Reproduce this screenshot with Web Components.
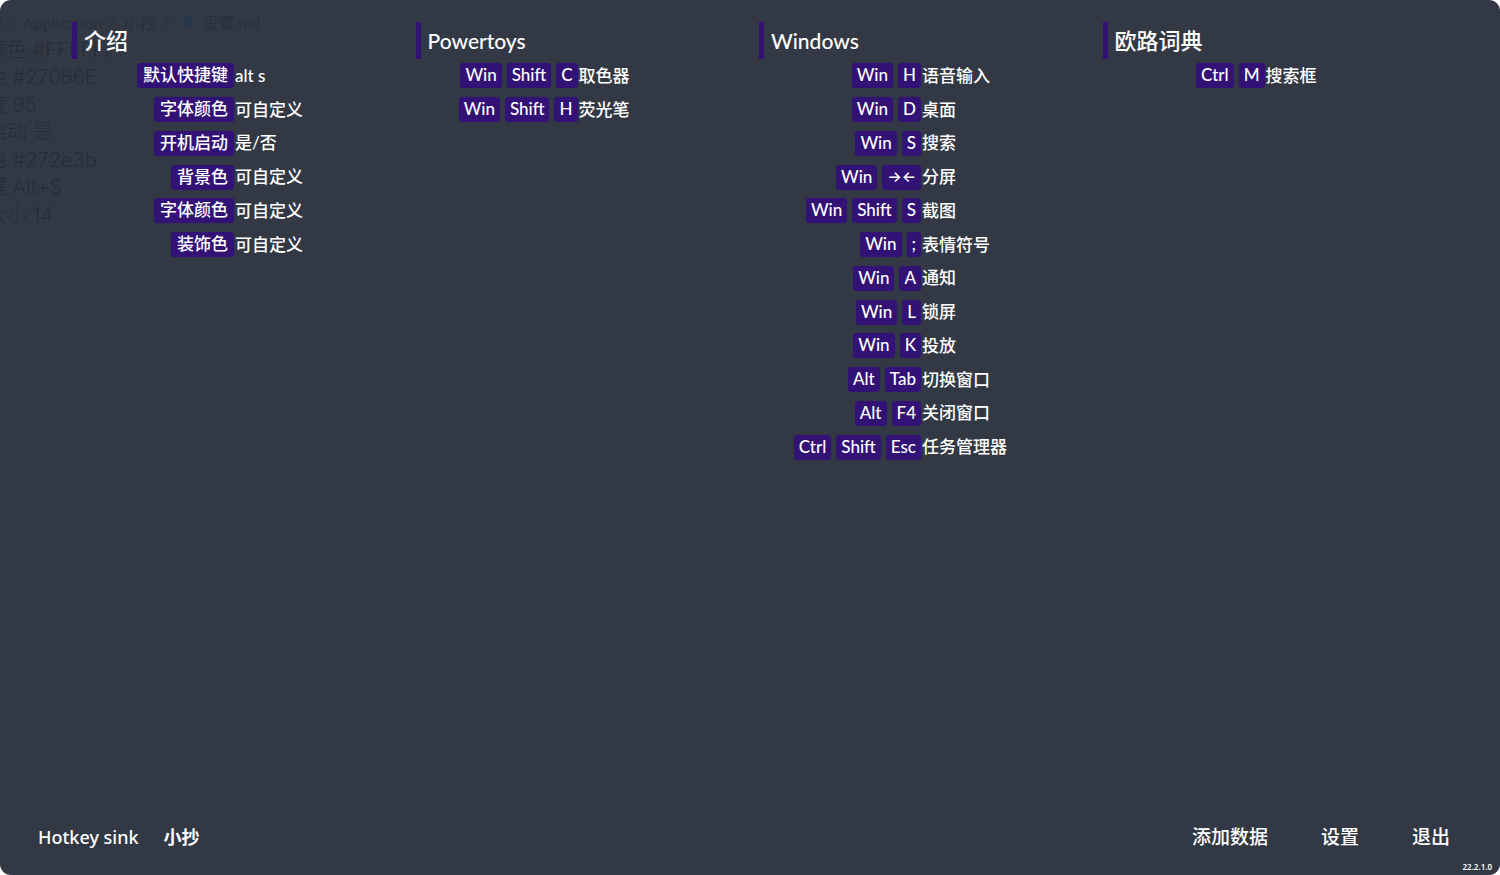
<!DOCTYPE html>
<html lang="zh-CN">
<head>
<meta charset="utf-8">
<title>Hotkey sink 小抄</title>
<style>
  html, body { margin: 0; background: #fff; }
</style>
</head>
<body>
<hotkey-app></hotkey-app>

<script>
const define = (name, html, extra) => {
  const template = document.createElement('template');
  template.innerHTML = html;
  customElements.define(name, class extends HTMLElement {
    constructor() {
      super();
      this.attachShadow({ mode: 'open' }).append(template.content.cloneNode(true));
    }
    connectedCallback() { if (extra) extra(this); }
  });
};

/* One key cap */
define('key-cap', `
  <style>
    :host { display: block; }
    kbd {
      display: block; box-sizing: border-box; height: 25px; padding: 0 5px;
      border-radius: 4px; background: var(--accent);
      box-shadow: 0 0 1px var(--accent);
      font: inherit; font-weight: 500; line-height: 24px; white-space: nowrap;
    }
    :host([han]) kbd { padding: 0 6px; }
    :host([arrows]) kbd { font-family: Inter, sans-serif; font-size: 15px; }
  </style>
  <kbd><slot></slot></kbd>`);

/* One shortcut: its keys on the left, its meaning on the right */
define('hotkey-row', `
  <style>
    :host { display: grid; grid-template-columns: 162px 1fr; gap: 1px; align-items: center; }
    .keys { display: flex; justify-content: flex-end; gap: 5px; }
    .text { font-weight: 500; line-height: 24px; white-space: nowrap; }
  </style>
  <div class="keys"></div>
  <div class="text"><slot></slot></div>`, row => {
    const box = row.shadowRoot.querySelector('.keys');
    box.replaceChildren(...row.getAttribute('keys').split(' ').map(key => {
      const cap = document.createElement('key-cap');
      cap.textContent = key;
      if (/[\u4e00-\u9fff]/.test(key)) cap.setAttribute('han', '');
      if (/[→←]/.test(key)) cap.setAttribute('arrows', '');
      return cap;
    }));
  });

/* A titled group of shortcuts */
define('hotkey-group', `
  <style>
    :host { display: block; }
    h2 {
      margin: 0; padding-left: 7px; border-left: 5px solid var(--accent);
      font-size: 22px; font-weight: 500; line-height: 37px;
    }
    :host([latin]) h2 { font-size: 21px; }
    .rows { display: grid; grid-template-rows: repeat(12, 1fr); height: 405px; }
  </style>
  <section>
    <h2></h2>
    <div class="rows"><slot></slot></div>
  </section>`, group => {
    group.shadowRoot.querySelector('h2').textContent = group.getAttribute('heading');
  });

/* The document that shows faintly through the window */
define('page-behind', `
  <style>
    :host {
      display: block; position: absolute; inset: 0 auto auto 0; color: #262d36;
      font-weight: 400; white-space: nowrap; pointer-events: none;
    }
    .path { display: flex; align-items: center; gap: 7px; height: 24px; margin: 10px 0 3px -2px; font-size: 16px; color: #293039; }
    .chevron { width: 7px; height: 10px; fill: none; stroke: currentColor; }
    .mark { width: 12px; height: 14px; margin: 0 2px 0 5px; fill: #25364b; }
    p { margin: 0 0 0 -13px; font: 300 20px/27px Inter, "Noto Sans CJK SC", sans-serif; }
    .lines { display: grid; height: 192px; grid-template-rows: repeat(7, 1fr); }
  </style>
  <div class="path">
    <span>l</span>
    <svg class="chevron" viewBox="0 0 7 10"><path d="M1 1l5 4-5 4"/></svg>
    <span>Application</span>
    <svg class="chevron" viewBox="0 0 7 10"><path d="M1 1l5 4-5 4"/></svg>
    <span>小抄</span>
    <svg class="chevron" viewBox="0 0 7 10"><path d="M1 1l5 4-5 4"/></svg>
    <svg class="mark" viewBox="0 0 12 14"><path d="M2 1l2 1 1-1h3l1 1 1-1v6l2 1-5 5H6L1 9V7l1-1z"/></svg>
    <span>设置.md</span>
  </div>
  <div class="lines">
    <p>颜色 #FFFFFF</p>
    <p>色 #27066E</p>
    <p>度 95</p>
    <p>启动 是</p>
    <p>色 #272e3b</p>
    <p>键 Alt+S</p>
    <p>大小 14</p>
  </div>`);

define('app-footer', `
  <style>
    :host { display: block; }
    .bar { display: flex; align-items: center; padding: 0 50px 0 38px; height: 28px; }
    .name { display: flex; gap: 25px; margin: 0; font: 500 18px/30px "Noto Sans", "Noto Sans CJK SC", sans-serif; }
    .name span + span { font-weight: 700; }
    nav { display: flex; gap: 53px; margin-left: auto; }
    button {
      border: 0; padding: 0; background: none; color: inherit; cursor: pointer;
      font: inherit; font-size: 19px; font-weight: 500; line-height: 26px;
    }
    small {
      display: block; padding: 10px 8px 2px; text-align: right;
      font: 600 8px/12px "Noto Sans", sans-serif;
    }
  </style>
  <footer>
    <div class="bar">
      <h1 class="name"><span>Hotkey sink</span><span>小抄</span></h1>
      <nav>
        <button type="button">添加数据</button>
        <button type="button">设置</button>
        <button type="button">退出</button>
      </nav>
    </div>
    <small>22.2.1.0</small>
  </footer>`);

define('hotkey-app', `
  <style>
    :host {
      --accent: #321275;
      display: flex; flex-direction: column; position: relative; overflow: hidden;
      box-sizing: border-box; min-height: 100vh; border-radius: 11px;
      background: #333944; color: #fff;
      font: 17px Lato, "Noto Sans CJK SC", sans-serif;
    }
    main {
      flex: 1; position: relative; display: grid; align-items: start;
      grid-template-columns: repeat(4, 1fr); padding: 22px 54px 0 72px;
    }
  </style>
  <page-behind aria-hidden="true"></page-behind>
  <main>
    <hotkey-group heading="介绍">
      <hotkey-row keys="默认快捷键">alt s</hotkey-row>
      <hotkey-row keys="字体颜色">可自定义</hotkey-row>
      <hotkey-row keys="开机启动">是/否</hotkey-row>
      <hotkey-row keys="背景色">可自定义</hotkey-row>
      <hotkey-row keys="字体颜色">可自定义</hotkey-row>
      <hotkey-row keys="装饰色">可自定义</hotkey-row>
    </hotkey-group>
    <hotkey-group heading="Powertoys" latin>
      <hotkey-row keys="Win Shift C">取色器</hotkey-row>
      <hotkey-row keys="Win Shift H">荧光笔</hotkey-row>
    </hotkey-group>
    <hotkey-group heading="Windows" latin>
      <hotkey-row keys="Win H">语音输入</hotkey-row>
      <hotkey-row keys="Win D">桌面</hotkey-row>
      <hotkey-row keys="Win S">搜索</hotkey-row>
      <hotkey-row keys="Win →←">分屏</hotkey-row>
      <hotkey-row keys="Win Shift S">截图</hotkey-row>
      <hotkey-row keys="Win ;">表情符号</hotkey-row>
      <hotkey-row keys="Win A">通知</hotkey-row>
      <hotkey-row keys="Win L">锁屏</hotkey-row>
      <hotkey-row keys="Win K">投放</hotkey-row>
      <hotkey-row keys="Alt Tab">切换窗口</hotkey-row>
      <hotkey-row keys="Alt F4">关闭窗口</hotkey-row>
      <hotkey-row keys="Ctrl Shift Esc">任务管理器</hotkey-row>
    </hotkey-group>
    <hotkey-group heading="欧路词典">
      <hotkey-row keys="Ctrl M">搜索框</hotkey-row>
    </hotkey-group>
  </main>
  <app-footer></app-footer>`);
</script>
</body>
</html>
